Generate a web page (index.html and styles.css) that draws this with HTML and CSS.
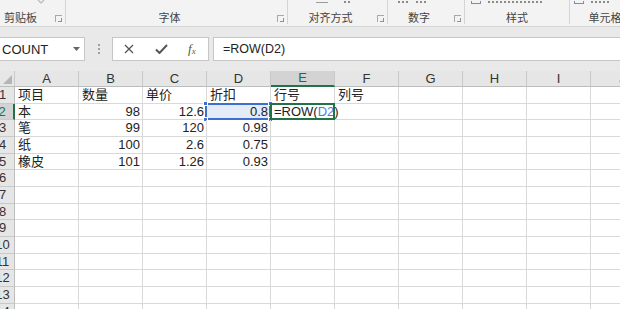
FILE: index.html
```html
<!DOCTYPE html>
<html>
<head>
<meta charset="utf-8">
<link rel="stylesheet" href="styles.css">
</head>
<body>
<div class="app">
  <div class="ribbon">
    <div class="grp g-clip">
      <div class="sliver"><svg class="s-arrow" width="8" height="4" viewBox="0 0 8 4"><path d="M1 0 L4 3 L7 0" fill="none" stroke="#b8b8b8" stroke-width="1.2"/></svg></div>
      <div class="grp-foot"><span class="lbl lbl-left">剪贴板</span><i class="launch"></i></div>
    </div>
    <div class="grp g-font">
      <div class="sliver"></div>
      <div class="grp-foot"><span class="lbl">字体</span><i class="launch"></i></div>
    </div>
    <div class="grp g-align">
      <div class="sliver"><span class="s-line"></span><span class="s-mark m-a"></span></div>
      <div class="grp-foot"><span class="lbl">对齐方式</span><i class="launch"></i></div>
    </div>
    <div class="grp g-num">
      <div class="sliver"><span class="s-mark m-n1"></span><span class="s-mark m-n2"></span></div>
      <div class="grp-foot"><span class="lbl">数字</span><i class="launch"></i></div>
    </div>
    <div class="grp g-style">
      <div class="sliver"><span class="s-icon"></span><span class="s-mark m-s"></span></div>
      <div class="grp-foot"><span class="lbl">样式</span></div>
    </div>
    <div class="grp g-cell">
      <div class="sliver"><span class="s-icon"></span><span class="s-mark m-c"></span></div>
      <div class="grp-foot"><span class="lbl">单元格</span></div>
    </div>
  </div>

  <div class="fbar">
    <div class="namebox">
      <span class="nb-text">COUNT</span>
      <svg class="nb-arrow" width="7" height="4" viewBox="0 0 7 4"><path d="M0 0 H7 L3.5 4 Z" fill="#666"/></svg>
    </div>
    <div class="dots"><i></i><i></i><i></i></div>
    <div class="btns">
      <svg width="10" height="10" viewBox="0 0 10 10"><path d="M1 1 L9 9 M9 1 L1 9" stroke="#555" stroke-width="1.3" fill="none"/></svg>
      <svg width="13" height="10" viewBox="0 0 13 10"><path d="M1 5.5 L4.5 9 L12 1" stroke="#555" stroke-width="2" fill="none"/></svg>
      <span class="fx">f<sub>x</sub></span>
    </div>
    <div class="formula">=ROW(D2)</div>
  </div>

  <div class="sheet">
    <div class="grid">
      <div class="hd corner"><svg width="9" height="9" viewBox="0 0 9 9"><path d="M9 0 V9 H0 Z" fill="#b5b5b5"/></svg></div>
      <div class="hd">A</div><div class="hd">B</div><div class="hd">C</div><div class="hd">D</div><div class="hd hd-on">E</div><div class="hd">F</div><div class="hd">G</div><div class="hd">H</div><div class="hd">I</div><div class="hd">J</div>

      <div class="rh">1</div><div class="c">项目</div><div class="c">数量</div><div class="c">单价</div><div class="c">折扣</div><div class="c">行号</div><div class="c">列号</div><div class="c"></div><div class="c"></div><div class="c"></div><div class="c"></div>

      <div class="rh rh-on">2</div><div class="c">本</div><div class="c n">98</div><div class="c n">12.6</div><div class="c n sel">0.8<span class="sel-box"><i class="h tl"></i><i class="h bl"></i><i class="h tr"></i><i class="h br"></i></span></div><div class="c edit">=ROW(<span class="ref">D2</span>)<span class="edit-box"></span></div><div class="c"></div><div class="c"></div><div class="c"></div><div class="c"></div><div class="c"></div>

      <div class="rh">3</div><div class="c">笔</div><div class="c n">99</div><div class="c n">120</div><div class="c n">0.98</div><div class="c"></div><div class="c"></div><div class="c"></div><div class="c"></div><div class="c"></div><div class="c"></div>

      <div class="rh">4</div><div class="c">纸</div><div class="c n">100</div><div class="c n">2.6</div><div class="c n">0.75</div><div class="c"></div><div class="c"></div><div class="c"></div><div class="c"></div><div class="c"></div><div class="c"></div>

      <div class="rh">5</div><div class="c">橡皮</div><div class="c n">101</div><div class="c n">1.26</div><div class="c n">0.93</div><div class="c"></div><div class="c"></div><div class="c"></div><div class="c"></div><div class="c"></div><div class="c"></div>

      <div class="rh">6</div><div class="c"></div><div class="c"></div><div class="c"></div><div class="c"></div><div class="c"></div><div class="c"></div><div class="c"></div><div class="c"></div><div class="c"></div><div class="c"></div>
      <div class="rh">7</div><div class="c"></div><div class="c"></div><div class="c"></div><div class="c"></div><div class="c"></div><div class="c"></div><div class="c"></div><div class="c"></div><div class="c"></div><div class="c"></div>
      <div class="rh">8</div><div class="c"></div><div class="c"></div><div class="c"></div><div class="c"></div><div class="c"></div><div class="c"></div><div class="c"></div><div class="c"></div><div class="c"></div><div class="c"></div>
      <div class="rh">9</div><div class="c"></div><div class="c"></div><div class="c"></div><div class="c"></div><div class="c"></div><div class="c"></div><div class="c"></div><div class="c"></div><div class="c"></div><div class="c"></div>
      <div class="rh">10</div><div class="c"></div><div class="c"></div><div class="c"></div><div class="c"></div><div class="c"></div><div class="c"></div><div class="c"></div><div class="c"></div><div class="c"></div><div class="c"></div>
      <div class="rh">11</div><div class="c"></div><div class="c"></div><div class="c"></div><div class="c"></div><div class="c"></div><div class="c"></div><div class="c"></div><div class="c"></div><div class="c"></div><div class="c"></div>
      <div class="rh">12</div><div class="c"></div><div class="c"></div><div class="c"></div><div class="c"></div><div class="c"></div><div class="c"></div><div class="c"></div><div class="c"></div><div class="c"></div><div class="c"></div>
      <div class="rh">13</div><div class="c"></div><div class="c"></div><div class="c"></div><div class="c"></div><div class="c"></div><div class="c"></div><div class="c"></div><div class="c"></div><div class="c"></div><div class="c"></div>
      <div class="rh">14</div><div class="c"></div><div class="c"></div><div class="c"></div><div class="c"></div><div class="c"></div><div class="c"></div><div class="c"></div><div class="c"></div><div class="c"></div><div class="c"></div>
    </div>
  </div>
</div>
</body>
</html>
```

FILE: styles.css
```css
* { box-sizing: border-box; }
html, body { margin: 0; padding: 0; }
body {
  width: 620px;
  height: 309px;
  overflow: hidden;
  background: #ffffff;
  font-family: "Liberation Sans", "Noto Sans CJK SC", sans-serif;
}
.app {
  width: 620px;
  height: 309px;
  overflow: hidden;
  display: flex;
  flex-direction: column;
}

/* ---------- ribbon ---------- */
.ribbon {
  height: 27px;
  flex: none;
  display: flex;
  background: #f3f3f3;
  border-bottom: 1px solid #d6d6d6;
}
.grp {
  flex: none;
  height: 24px;
  display: flex;
  flex-direction: column;
  border-right: 1px solid #d4d4d4;
}
.g-clip { width: 66px; }
.g-font { width: 222px; }
.g-align { width: 100px; }
.g-num { width: 77px; }
.g-style { width: 105px; }
.g-cell { width: 70px; border-right: none; }

.sliver {
  height: 4px;
  overflow: hidden;
  display: flex;
  align-items: flex-end;
  flex: none;
}
.s-arrow { margin-left: 37px; }
.s-line { width: 12px; height: 1px; background: #9a9a9a; margin-left: 28px; margin-bottom: 1px; flex: none; }
.s-mark {
  flex: none;
  height: 2px;
  margin-bottom: 1px;
  background: repeating-linear-gradient(90deg, #8a8a8a 0 2px, transparent 2px 4px);
}
.m-a { width: 6px; margin-left: 16px; }
.m-n1 { width: 10px; margin-left: 10px; }
.m-n2 { width: 10px; margin-left: 8px; }
.m-s { width: 56px; }
.m-c { width: 18px; }
.s-icon { width: 10px; height: 3px; border: 1px solid #7a8fb0; border-top: none; flex: none; margin: 0 7px 0 6px; }
.g-cell .s-icon { margin-left: 4px; }

.grp-foot {
  flex: 1;
  display: flex;
  align-items: flex-end;
}
.lbl {
  flex: 1;
  text-align: center;
  font-family: "Noto Sans CJK SC", sans-serif;
  font-size: 11px;
  line-height: 14px;
  color: #444;
  white-space: nowrap;
}
.lbl-left { text-align: left; padding-left: 4px; }
.launch {
  flex: none;
  width: 7px;
  height: 7px;
  margin: 0 3px 2px 4px;
  border-left: 1px solid #a8a8a8;
  border-top: 1px solid #a8a8a8;
  position: relative;
}
.launch::after {
  content: "";
  position: absolute;
  right: 0;
  bottom: 0;
  width: 3px;
  height: 3px;
  border-right: 1px solid #909090;
  border-bottom: 1px solid #909090;
}

/* ---------- formula bar ---------- */
.fbar {
  height: 44px;
  flex: none;
  background: #e9e9e9;
  display: flex;
  align-items: flex-start;
  padding-top: 10px;
}
.namebox {
  width: 85px;
  height: 24px;
  background: #fff;
  border: 1px solid #c6c6c6;
  border-left: none;
  display: flex;
  align-items: center;
  padding-left: 2px;
  padding-right: 4px;
}
.nb-text {
  flex: 1;
  font-size: 13px;
  color: #222;
}
.nb-arrow { flex: none; }
.dots {
  width: 27px;
  height: 24px;
  display: flex;
  flex-direction: column;
  align-items: center;
  justify-content: center;
  gap: 2px;
}
.dots i { width: 2px; height: 2px; background: #a0a0a0; display: block; }
.btns {
  width: 97px;
  height: 24px;
  background: #fff;
  border: 1px solid #c6c6c6;
  display: flex;
  align-items: center;
  padding-left: 11px;
}
.btns svg:nth-child(1) { margin-right: 21px; }
.btns svg:nth-child(2) { margin-right: 20px; }
.fx {
  font-family: "Liberation Serif", serif;
  font-style: italic;
  font-size: 13px;
  color: #555;
  line-height: 1;
}
.fx sub { font-size: 9px; vertical-align: -1px; }
.formula {
  margin-left: 4px;
  flex: 1;
  height: 24px;
  background: #fff;
  border: 1px solid #c6c6c6;
  border-right: none;
  font-size: 12.5px;
  line-height: 22px;
  padding-left: 9px;
  color: #222;
}

/* ---------- sheet ---------- */
.sheet {
  flex: 1;
  overflow: hidden;
  background: #fff;
}
.grid {
  margin-left: -9px;
  display: grid;
  grid-template-columns: 24px repeat(10, 64px);
  grid-template-rows: 16px repeat(14, 16.67px);
  width: 664px;
}
.hd {
  background: #e6e6e6;
  border-right: 1px solid #c9c9c9;
  border-bottom: 1px solid #bdbdbd;
  font-size: 13px;
  line-height: 15px;
  text-align: center;
  color: #333;
}
.corner {
  display: flex;
  align-items: flex-end;
  justify-content: flex-end;
  padding: 0 2px 2px 0;
}
.hd-on {
  background: #d3d3d3;
  color: #1e6b40;
  border-bottom: 2px solid #217346;
  line-height: 14px;
}
.rh {
  background: #e6e6e6;
  border-right: 1px solid #bdbdbd;
  border-bottom: 1px solid #c9c9c9;
  font-size: 13px;
  line-height: 16px;
  text-align: center;
  color: #333;
}
.rh-on {
  background: #d3d3d3;
  color: #217346;
  border-right: 2px solid #217346;
}
.c {
  border-right: 1px solid #d9d9d9;
  border-bottom: 1px solid #d9d9d9;
  font-size: 13px;
  line-height: 16px;
  padding: 0 2px 0 3px;
  color: #222;
  white-space: nowrap;
  position: relative;
}
.n { text-align: right; }
.sel { background: #e4ecf8; }
.sel-box {
  position: absolute;
  left: -2px;
  top: -1px;
  right: -1px;
  bottom: -1px;
  border: 2px solid #3f6fcc;
}
.h {
  position: absolute;
  width: 5px;
  height: 5px;
  background: #3f6fcc;
  border: 1px solid #fff;
}
.h.tl { left: -4px; top: -4px; }
.h.bl { left: -4px; bottom: -4px; }
.h.tr { right: -4px; top: -4px; }
.h.br { right: -4px; bottom: -4px; }
.edit { z-index: 2; }
.ref { color: #4a7ed8; }
.edit-box {
  position: absolute;
  left: -1px;
  top: -1px;
  right: -1px;
  bottom: -1px;
  border: 2px solid #217346;
}
```
